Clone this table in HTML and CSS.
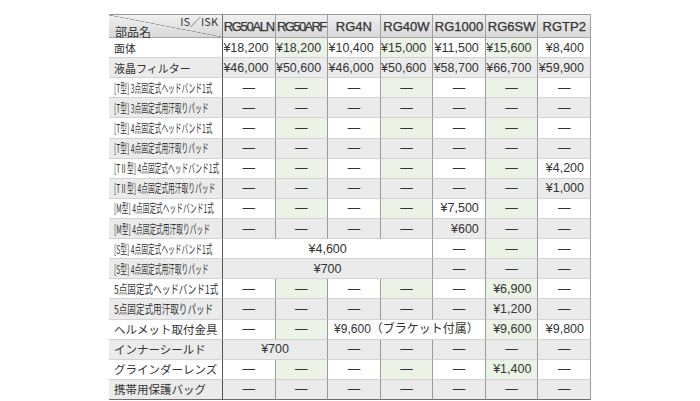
FILE: index.html
```html
<!DOCTYPE html>
<html lang="ja">
<head>
<meta charset="utf-8">
<title>部品価格表</title>
<link rel="stylesheet" href="styles.css">
</head>
<body>
<div class="wrap">
<table class="price">
<colgroup><col class="c-name"><col class="c-val" span="7"></colgroup>
<thead>
<tr>
<th class="corner"><div class="corner-in"><span class="isk">IS／ISK</span><span class="part">部品名</span></div></th>
<th class="t1">RG50ALN</th><th class="t2">RG50ARF</th><th>RG4N</th><th>RG40W</th><th>RG1000</th><th>RG6SW</th><th>RGTP2</th>
</tr>
</thead>
<tbody>
<tr class="w"><td class="nm big s11">面体</td><td class="p">¥18,200</td><td class="p gr">¥18,200</td><td class="p">¥10,400</td><td class="p gr">¥15,000</td><td class="p">¥11,500</td><td class="p gr">¥15,600</td><td class="p">¥8,400</td></tr>
<tr class="g"><td class="nm big s11">液晶フィルター</td><td class="p">¥46,000</td><td class="p">¥50,600</td><td class="p">¥46,000</td><td class="p">¥50,600</td><td class="p">¥58,700</td><td class="p">¥66,700</td><td class="p">¥59,900</td></tr>
<tr class="w"><td class="nm"><span class="cond">[T型] 3点固定式ヘッドバンド1式</span></td><td>—</td><td class="gr">—</td><td>—</td><td class="gr">—</td><td>—</td><td class="gr">—</td><td>—</td></tr>
<tr class="g"><td class="nm"><span class="cond">[T型] 3点固定式用汗取りパッド</span></td><td>—</td><td>—</td><td>—</td><td>—</td><td>—</td><td>—</td><td>—</td></tr>
<tr class="w"><td class="nm"><span class="cond">[T型] 4点固定式ヘッドバンド1式</span></td><td>—</td><td class="gr">—</td><td>—</td><td class="gr">—</td><td>—</td><td class="gr">—</td><td>—</td></tr>
<tr class="g"><td class="nm"><span class="cond">[T型] 4点固定式用汗取りパッド</span></td><td>—</td><td>—</td><td>—</td><td>—</td><td>—</td><td>—</td><td>—</td></tr>
<tr class="w"><td class="nm"><span class="cond">[TⅡ型] 4点固定式ヘッドバンド1式</span></td><td>—</td><td class="gr">—</td><td>—</td><td class="gr">—</td><td>—</td><td class="gr">—</td><td class="p">¥4,200</td></tr>
<tr class="g"><td class="nm"><span class="cond">[TⅡ型] 4点固定式用汗取りパッド</span></td><td>—</td><td>—</td><td>—</td><td>—</td><td>—</td><td>—</td><td class="p">¥1,000</td></tr>
<tr class="w"><td class="nm"><span class="cond">[M型] 4点固定式ヘッドバンド1式</span></td><td>—</td><td class="gr">—</td><td>—</td><td class="gr">—</td><td class="p">¥7,500</td><td class="gr">—</td><td>—</td></tr>
<tr class="g"><td class="nm"><span class="cond">[M型] 4点固定式用汗取りパッド</span></td><td>—</td><td>—</td><td>—</td><td>—</td><td class="p">¥600</td><td>—</td><td>—</td></tr>
<tr class="w"><td class="nm"><span class="cond">[S型] 4点固定式ヘッドバンド1式</span></td><td colspan="4">¥4,600</td><td>—</td><td class="gr">—</td><td>—</td></tr>
<tr class="g"><td class="nm"><span class="cond">[S型] 4点固定式用汗取りパッド</span></td><td colspan="4">¥700</td><td>—</td><td>—</td><td>—</td></tr>
<tr class="w"><td class="nm"><span class="cond5">5点固定式ヘッドバンド1式</span></td><td>—</td><td class="gr">—</td><td>—</td><td class="gr">—</td><td>—</td><td class="p gr">¥6,900</td><td>—</td></tr>
<tr class="g"><td class="nm"><span class="cond5">5点固定式用汗取りパッド</span></td><td>—</td><td>—</td><td>—</td><td>—</td><td>—</td><td class="p">¥1,200</td><td>—</td></tr>
<tr class="w"><td class="nm big">ヘルメット取付金具</td><td>—</td><td class="gr">—</td><td colspan="3" class="jp">¥9,600（ブラケット付属）</td><td class="p gr">¥9,600</td><td class="p">¥9,800</td></tr>
<tr class="g"><td class="nm big">インナーシールド</td><td colspan="2">¥700</td><td>—</td><td>—</td><td>—</td><td>—</td><td>—</td></tr>
<tr class="w"><td class="nm big">グラインダーレンズ</td><td>—</td><td class="gr">—</td><td>—</td><td class="gr">—</td><td>—</td><td class="p gr">¥1,400</td><td>—</td></tr>
<tr class="g last"><td class="nm big">携帯用保護バッグ</td><td>—</td><td>—</td><td>—</td><td>—</td><td>—</td><td>—</td><td>—</td></tr>
</tbody>
</table>
</div>
</body>
</html>
```

FILE: styles.css
```css
html, body {
  margin: 0;
  padding: 0;
  background: #ffffff;
}

body {
  font-family: "Liberation Sans", "Noto Sans CJK JP", sans-serif;
  color: #333333;
}

.wrap {
  padding: 14px 0 0 109px;
}

table.price {
  border-collapse: separate;
  border-spacing: 0;
  table-layout: fixed;
  width: 482px;
}

col.c-name { width: 114px; }
col.c-val { width: 52.57px; }

.price th {
  height: 22px;
  padding: 0;
  border-top: 1px solid #9a9a9a;
  border-bottom: 1px solid #a8a8a8;
  border-right: 1px solid #a0a0a0;
  background: linear-gradient(#f0f0f0, #d8d8d8);
  font-size: 13px;
  font-weight: normal;
  color: #333333;
  -webkit-text-stroke: 0.25px #333333;
  text-align: center;
  vertical-align: middle;
  white-space: nowrap;
}

.price th.t1 { letter-spacing: -1.3px; }
.price th.t2 { letter-spacing: -1.6px; }

.price th.corner {
  border-right-color: #777777;
  background:
    linear-gradient(to top right, transparent calc(50% - 0.6px), #8c8c8c 50%, transparent calc(50% + 0.6px)),
    linear-gradient(#f0f0f0, #d8d8d8);
  -webkit-text-stroke: 0;
}

.corner-in {
  height: 22px;
  box-sizing: border-box;
  padding: 1px 4px 2px 6px;
  display: flex;
  flex-direction: column;
  justify-content: space-between;
  font-family: "Noto Sans CJK JP", sans-serif;
  color: #333333;
}

.isk {
  align-self: flex-end;
  font-size: 11px;
  line-height: 10px;
}

.part {
  align-self: flex-start;
  font-size: 12px;
  line-height: 11px;
}

.price td {
  height: 19.12px;
  padding: 0;
  border-right: 1px solid #9a9a9a;
  border-bottom: 1px solid #d2d2d2;
  text-align: center;
  vertical-align: middle;
  font-size: 12.5px;
  line-height: 14px;
  white-space: nowrap;
  color: #333333;
}

.price td.p {
  text-align: right;
  padding-right: 6px;
}

.price td.jp {
  font-family: "Liberation Sans", "Noto Sans CJK JP", sans-serif;
  font-size: 12px;
}

.price td.nm {
  text-align: left;
  padding-left: 5px;
  border-right-color: #555555;
  font-family: "Noto Sans CJK JP", sans-serif;
  color: #333333;
}

.price td.big {
  font-size: 11.5px;
}

.price td.s11 {
  font-size: 11px;
}

.cond, .cond5 {
  display: inline-block;
  font-size: 12px;
  line-height: 14px;
  transform-origin: left center;
}

.cond { transform: scaleX(0.56); }
.cond5 { transform: scaleX(0.715); }

tr.w td { background: #ffffff; }
tr.w td.gr { background: #eaf3e5; }
tr.g td { background: #ebebeb; }

tr.last td {
  border-bottom: 1px solid #6e6e6e;
}
```
